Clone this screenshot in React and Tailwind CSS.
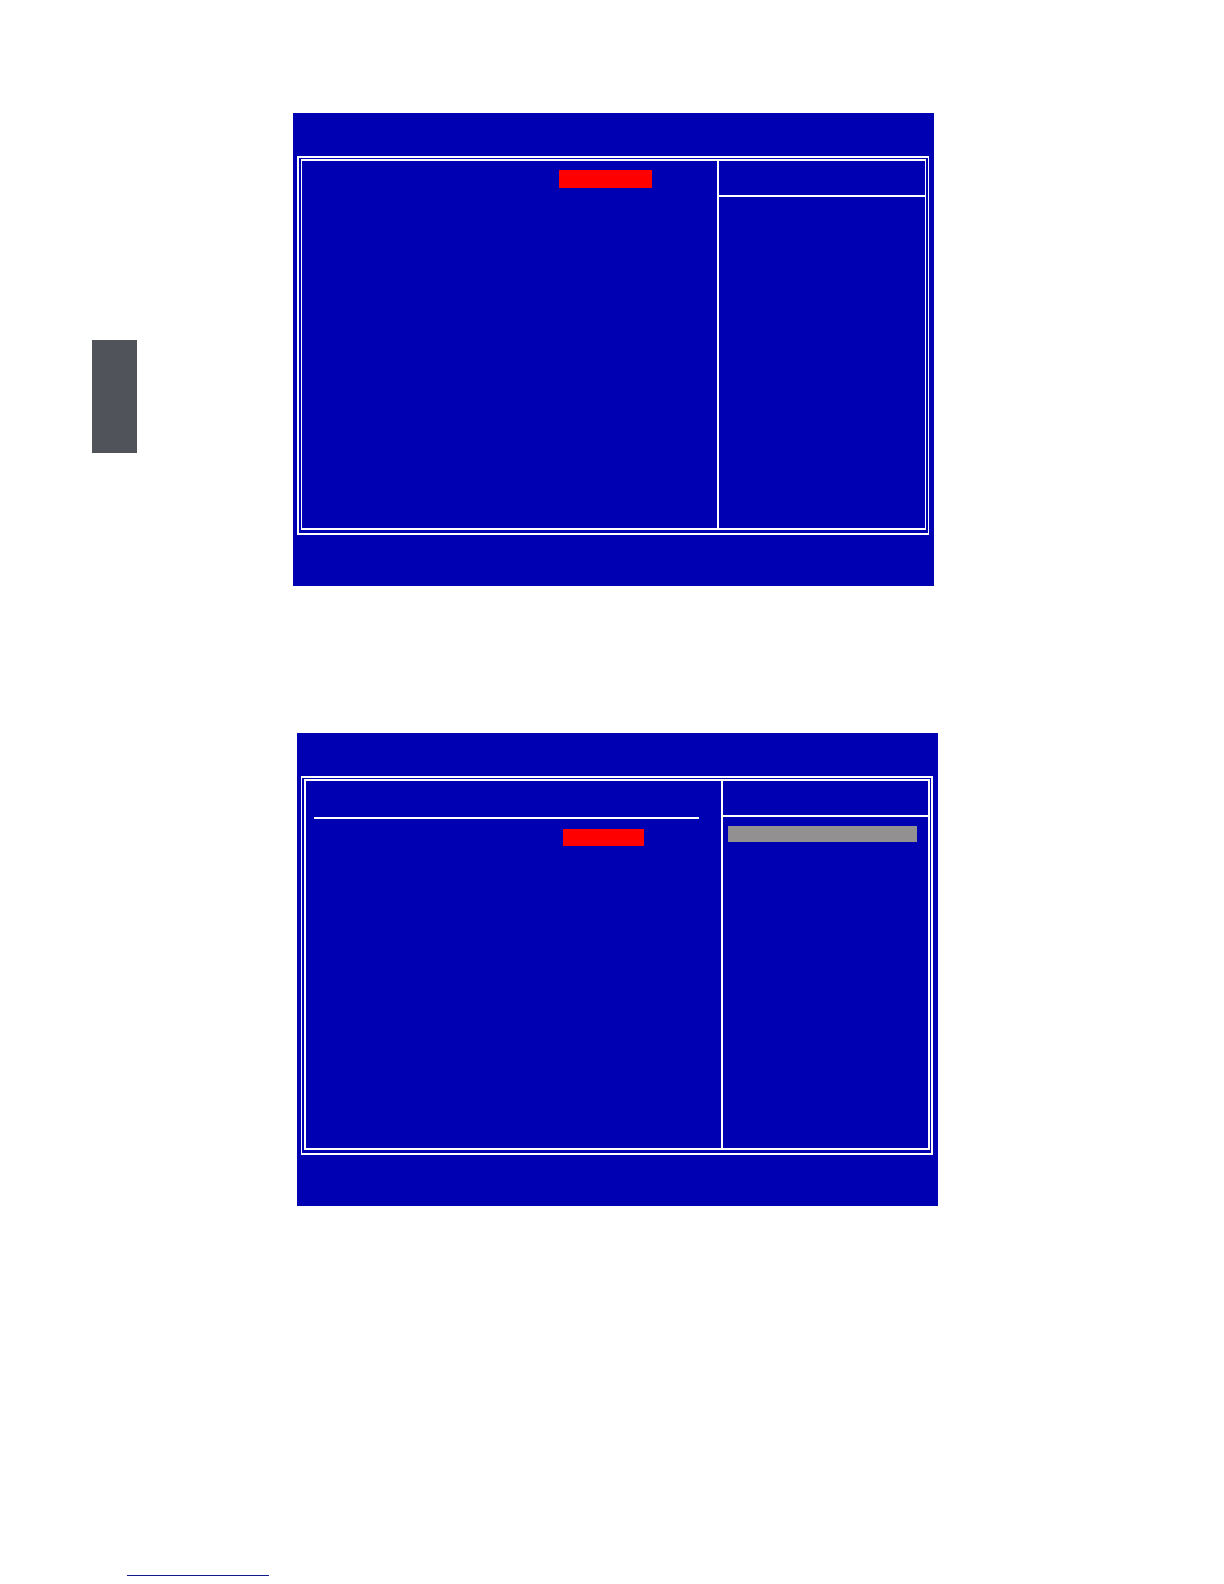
function Screen({ className, outer, inner, children, help }) {
  return (
    <section className={`w-full max-w-[641px] bg-[#0000b3] pt-[43px] pr-[5px] pb-[51px] pl-1 ${className}`}>
      <div className={`border-white pt-px pb-[3px] ${outer}`}>
        <div className={`flex min-h-[371px] border-white ${inner}`}>
          <div className="min-w-0 flex-1">{children}</div>
          <aside className="w-1/3 border-l-2 border-white">
            <div className="h-9 border-b-2 border-white" />
            {help}
          </aside>
        </div>
      </div>
    </section>
  )
}

export default function App() {
  return (
    <div className="min-h-screen bg-white pb-2">
      <main className="flex pt-[113px] pr-6 pl-[92px]">
        <div className="mt-[227px] h-[113px] w-[45px] shrink-0 bg-[#50535a]" />

        <div className="ml-[156px] min-w-0 flex-1">
          <Screen
            className="mb-[147px]"
            outer="border-y-2 border-l-2 border-r px-[2px]"
            inner="border-y-2 border-x"
          >
            <div className="mt-[9px] ml-[257px] h-[18px] w-[93px] bg-[#ff0000]" />
          </Screen>

          <Screen
            className="ml-1"
            outer="border-y-2 border-l border-r-2 pr-px pl-[2px]"
            inner="border-2"
            help={<div className="mt-[9px] mr-[11px] ml-[5px] h-4 bg-[#929090]" />}
          >
            <hr className="mt-9 mr-[22px] ml-2 border-t-2 border-white" />
            <div className="mt-[10px] ml-[257px] h-[17px] w-[81px] bg-[#ff0000]" />
          </Screen>
        </div>
      </main>

      <footer className="mt-[369px] pl-[127px]">
        <a href="#" aria-label="Website" className="block w-[142px] border-b border-[#101a8c]" />
      </footer>
    </div>
  )
}
